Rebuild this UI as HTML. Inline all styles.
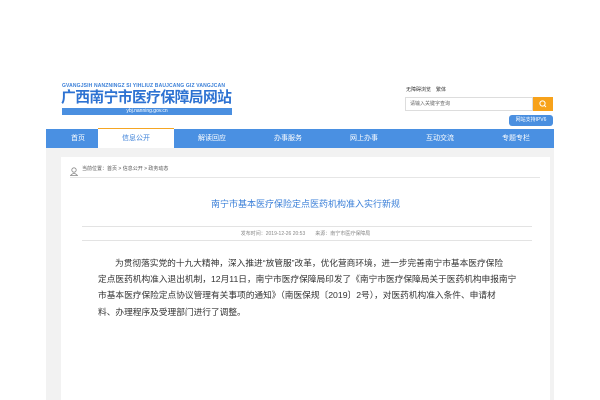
<!DOCTYPE html>
<html><head><meta charset="utf-8"><style>
*{margin:0;padding:0;box-sizing:border-box}
body{width:600px;height:400px;background:#fff;font-family:"Liberation Sans","Noto Sans CJK SC",sans-serif;position:relative;overflow:hidden}
.a{position:absolute;white-space:nowrap}
</style></head><body>
<div class="a" style="left:62px;top:83px;font-size:5px;color:#3a7fd8;font-weight:bold;letter-spacing:0.15px">GVANGJSIH NANZNINGZ SI YIHLIUZ BAUJCANG GIZ VANGJCAN</div>
<div class="a" style="left:61px;top:90px;font-size:14.8px;line-height:17px;color:#2d72d2;font-weight:bold;letter-spacing:-0.6px">广西南宁市医疗保障局网站</div>
<div class="a" style="left:62px;top:108px;width:170px;height:7px;background:#4a8fe0;color:#fff;font-size:5px;line-height:7px;text-align:center">ybj.nanning.gov.cn</div>

<div class="a" style="left:406px;top:86px;font-size:5px;color:#333">无障碍浏览　繁体</div>
<div class="a" style="left:405px;top:97px;width:128px;height:14px;border:1px solid #ddd;font-size:5px;color:#666;line-height:12px;padding-left:4px">请输入关键字查询</div>
<div class="a" style="left:533px;top:97px;width:20px;height:14px;background:#f7a21b"><svg width="20" height="14"><circle cx="9.5" cy="6.5" r="2.6" fill="none" stroke="#fff" stroke-width="1"/><line x1="11.4" y1="8.4" x2="13" y2="10" stroke="#fff" stroke-width="1"/></svg></div>
<div class="a" style="left:509px;top:115px;width:44px;height:11px;background:#4a8fe0;border-radius:3px;color:#fff;font-size:5px;line-height:11px;text-align:center">网站支持IPV6</div>

<div class="a" style="left:46px;top:129px;width:508px;height:19px;background:#4a90e2"></div>
<div class="a" style="left:98px;top:128px;width:76px;height:20px;background:#fff;border-top:1px solid #f5a623"></div>
<div class="a" style="left:46px;top:129px;width:508px;height:19px;font-size:7px;line-height:19px;color:#fff">
<span class="a" style="left:12px;width:40px;text-align:center">首页</span>
<span class="a" style="left:52px;width:76px;text-align:center;color:#3a7fd8">信息公开</span>
<span class="a" style="left:128px;width:76px;text-align:center">解读回应</span>
<span class="a" style="left:204px;width:76px;text-align:center">办事服务</span>
<span class="a" style="left:280px;width:76px;text-align:center">网上办事</span>
<span class="a" style="left:356px;width:76px;text-align:center">互动交流</span>
<span class="a" style="left:432px;width:76px;text-align:center">专题专栏</span>
</div>
<div class="a" style="left:46px;top:148px;width:508px;height:252px;background:#f2f2f2"></div>
<div class="a" style="left:61px;top:157px;width:489px;height:243px;background:#fff"></div>
<div class="a" style="left:70px;top:163px;width:8px;height:9px"><svg width="8" height="9"><circle cx="4" cy="3" r="2.2" fill="none" stroke="#888" stroke-width="0.8"/><path d="M0.5 8.5 Q4 4.5 7.5 8.5Z" fill="none" stroke="#888" stroke-width="0.8"/></svg></div>
<div class="a" style="left:82px;top:165px;font-size:5px;color:#555">当前位置：首页 &gt; 信息公开 &gt; 政务动态</div>
<div class="a" style="left:70px;top:177px;width:470px;height:1px;background:#e6e6e6"></div>
<div class="a" style="left:61px;top:197px;width:489px;text-align:center;font-size:9px;color:#3a7fd8">南宁市基本医疗保险定点医药机构准入实行新规</div>
<div class="a" style="left:82px;top:226px;width:450px;height:1px;background:#e3e3e3"></div>
<div class="a" style="left:61px;top:230px;width:489px;text-align:center;font-size:5px;color:#888">发布时间：2019-12-26 20:53　　来源：南宁市医疗保障局</div>
<div class="a" style="left:82px;top:240px;width:450px;height:1px;background:#e3e3e3"></div>
<div class="a" style="left:98px;top:255px;width:430px;font-size:8.7px;line-height:16.2px;color:#333;white-space:nowrap">
<div style="padding-left:17px">为贯彻落实党的十九大精神，深入推进“放管服”改革，优化营商环境，进一步完善南宁市基本医疗保险</div>
<div>定点医药机构准入退出机制，12月11日，南宁市医疗保障局印发了《南宁市医疗保障局关于医药机构申报南宁</div>
<div>市基本医疗保险定点协议管理有关事项的通知》（南医保规〔2019〕2号），对医药机构准入条件、申请材</div>
<div>料、办理程序及受理部门进行了调整。</div>
</div>
</body></html>
